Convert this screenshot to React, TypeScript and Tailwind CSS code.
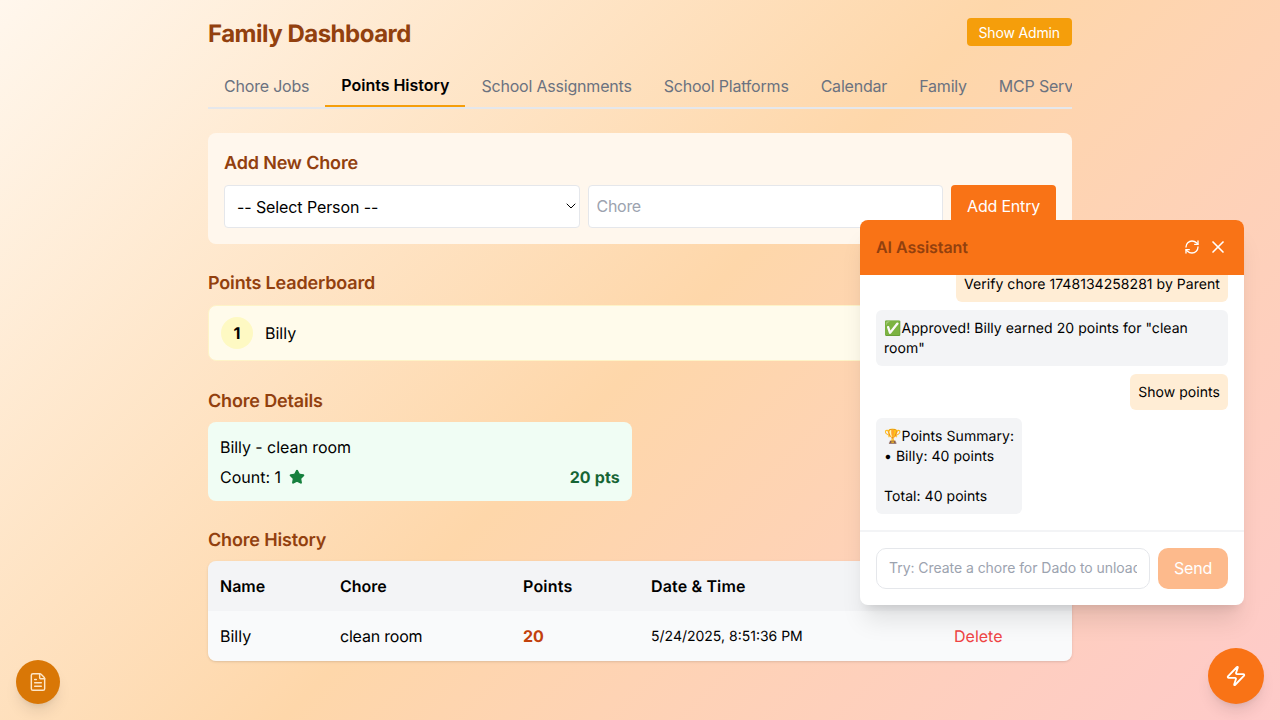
import React from "react";
import { ChevronDown, FileText, RefreshCw, Star, X, Zap } from "lucide-react";

const tabs = ["Chore Jobs", "Points History", "School Assignments", "School Platforms", "Calendar", "Family", "MCP Servers"];

export default function App() {
  return (
    <div className="relative h-screen overflow-hidden bg-[linear-gradient(135deg,#fff7ed_0%,#fed7aa_50%,#fecaca_100%)] font-['Inter',sans-serif] text-black [text-rendering:geometricPrecision]">
      <div className="mx-auto w-[864px] pt-4">
        {/* Header */}
        <div className="mb-[15px] flex items-start justify-between">
          <h1 className="pt-0.5 text-2xl font-bold tracking-[-0.5px] text-[#92400e]">Family Dashboard</h1>
          <button className="mt-0.5 h-7 rounded bg-[#f59e0b] px-3 pt-px text-sm tracking-[-0.15px] text-white">Show Admin</button>
        </div>

        {/* Tabs */}
        <div className="mb-6 flex overflow-hidden whitespace-nowrap border-b-2 border-[#e5e7eb]">
          {tabs.map((tab) =>
            tab === "Points History" ? (
              <button key={tab} className="shrink-0 border-b-2 border-[#f59e0b] px-4 py-2 font-semibold tracking-[-0.02px] text-black">
                {tab}
              </button>
            ) : (
              <button key={tab} className="shrink-0 px-4 py-[9px] tracking-[-0.2px] text-[#6b7280]">
                {tab}
              </button>
            )
          )}
        </div>

        {/* Add chore */}
        <div className="mb-6 rounded-lg bg-[#fff7ed] p-4">
          <h2 className="mb-[7px] pt-px text-lg font-semibold tracking-[-0.17px] text-[#92400e]">Add New Chore</h2>
          <div className="grid grid-cols-[1fr_1fr_auto] gap-2">
            <div className="relative">
              <select className="h-[43px] w-full appearance-none rounded border border-[#e5e7eb] bg-white px-3 text-base tracking-[-0.1px]">
                <option>-- Select Person --</option>
              </select>
              <ChevronDown size={16} strokeWidth={1.5} className="pointer-events-none absolute right-px top-[13px] text-black" />
            </div>
            <input
              placeholder="Chore"
              className="h-[43px] w-full rounded border border-[#e5e7eb] bg-white px-2 pb-0.5 text-base tracking-[-0.3px] placeholder:text-[#9ca3af]"
            />
            <button className="h-[43px] rounded bg-[#f97316] px-4 pb-0.5 text-base tracking-[-0.2px] text-white">Add Entry</button>
          </div>
        </div>

        {/* Leaderboard */}
        <h2 className="mb-[7px] pt-0.5 text-lg font-semibold tracking-[-0.17px] text-[#92400e]">Points Leaderboard</h2>
        <div className="mb-[25px] flex h-14 items-center gap-3 rounded-lg border border-[#fef3c7] bg-[#fffbeb] px-3">
          <div className="flex h-8 w-8 items-center justify-center rounded-full bg-[#fef9c3] font-bold">1</div>
          <span>Billy</span>
        </div>

        {/* Chore details */}
        <h2 className="mb-1.5 pt-0.5 text-lg font-semibold tracking-[-0.17px] text-[#92400e]">Chore Details</h2>
        <div className="mb-6 grid grid-cols-2 gap-4">
          <div className="rounded-lg bg-[#f0fdf4] p-3 pt-[13px]">
            <div className="tracking-[-0.05px]">Billy - clean room</div>
            <div className="mt-1.5 flex items-center justify-between">
              <span className="flex items-center gap-2">
                Count: 1 <Star size={16} className="fill-[#15803d] text-[#15803d]" />
              </span>
              <span className="font-bold tracking-[0.15px] text-[#166534]">20 pts</span>
            </div>
          </div>
        </div>

        {/* History */}
        <h2 className="mb-1.5 pt-0.5 text-lg font-semibold tracking-[-0.17px] text-[#92400e]">Chore History</h2>
        <div className="overflow-hidden rounded-lg shadow-sm">
          <table className="w-full table-fixed border-collapse text-left">
            <thead className="bg-[#f3f4f6]">
              <tr>
                <th className="w-[120px] px-3 py-[13px] font-semibold">Name</th>
                <th className="w-[183px] px-3 py-[13px] font-semibold">Chore</th>
                <th className="w-[128px] px-3 py-[13px] font-semibold tracking-[0.2px]">Points</th>
                <th className="w-[303px] px-3 py-[13px] font-semibold tracking-[0.15px]">Date &amp; Time</th>
                <th className="px-3 py-[13px]"></th>
              </tr>
            </thead>
            <tbody className="bg-[#f9fafb]">
              <tr>
                <td className="px-3 py-[13px]">Billy</td>
                <td className="px-3 py-[13px] tracking-[-0.2px]">clean room</td>
                <td className="px-3 py-[13px] font-bold text-[#c2410c]">20</td>
                <td className="px-3 pb-3 pt-3.5 text-sm">5/24/2025, 8:51:36 PM</td>
                <td className="px-3 py-[13px] text-[#ef4444]">Delete</td>
              </tr>
            </tbody>
          </table>
        </div>
      </div>

      {/* Notes button */}
      <button className="absolute bottom-4 left-4 flex h-11 w-11 items-center justify-center rounded-full bg-[#d97706] text-[#fde6c8] shadow-lg">
        <FileText size={20} strokeWidth={1.75} />
      </button>

      {/* Assistant button */}
      <button className="absolute bottom-4 right-4 flex h-14 w-14 items-center justify-center rounded-full bg-[#f97316] text-white shadow-lg">
        <Zap size={22} />
      </button>

      {/* AI panel */}
      <div className="absolute right-9 top-[220px] flex h-[385px] w-[384px] flex-col overflow-hidden rounded-lg bg-white shadow-xl">
        <div className="flex h-[55px] shrink-0 items-center justify-between bg-[#f97316] px-4 pb-0.5">
          <span className="font-semibold tracking-[-0.05px] text-[#92400e]">AI Assistant</span>
          <div className="flex items-center gap-2 text-white">
            <RefreshCw size={16} />
            <X size={20} />
          </div>
        </div>
        <div className="flex min-h-0 flex-1 flex-col justify-end gap-2 overflow-hidden px-4 pb-4 text-sm tracking-[0.05px]">
          <div className="shrink-0 self-end rounded-md bg-[#ffedd5] px-2 pb-[7px] pt-[9px]">Verify chore 1748134258281 by Parent</div>
          <div className="shrink-0 self-start rounded-md bg-[#f3f4f6] px-2 pb-[7px] pt-[9px]">✅Approved! Billy earned 20 points for "clean room"</div>
          <div className="shrink-0 self-end rounded-md bg-[#ffedd5] px-2 pb-[7px] pt-[9px]">Show points</div>
          <div className="shrink-0 self-start whitespace-pre-wrap rounded-md bg-[#f3f4f6] px-2 pb-[7px] pt-[9px]">{"🏆Points Summary:\n• Billy: 40 points\n\nTotal: 40 points"}</div>
        </div>
        <div className="flex shrink-0 gap-2 border-t-2 border-[#f3f4f6] p-4">
          <input
            placeholder="Try: Create a chore for Dado to unload the dishwasher"
            className="h-[41px] min-w-0 flex-1 rounded-[10px] border border-[#e5e7eb] px-3 pb-0.5 text-sm tracking-[-0.05px] placeholder:text-[#9ca3af]"
          />
          <button className="h-[41px] rounded-[10px] bg-[#fdba8c] px-4 pb-0.5 tracking-[-0.2px] text-white">Send</button>
        </div>
      </div>
    </div>
  );
}
